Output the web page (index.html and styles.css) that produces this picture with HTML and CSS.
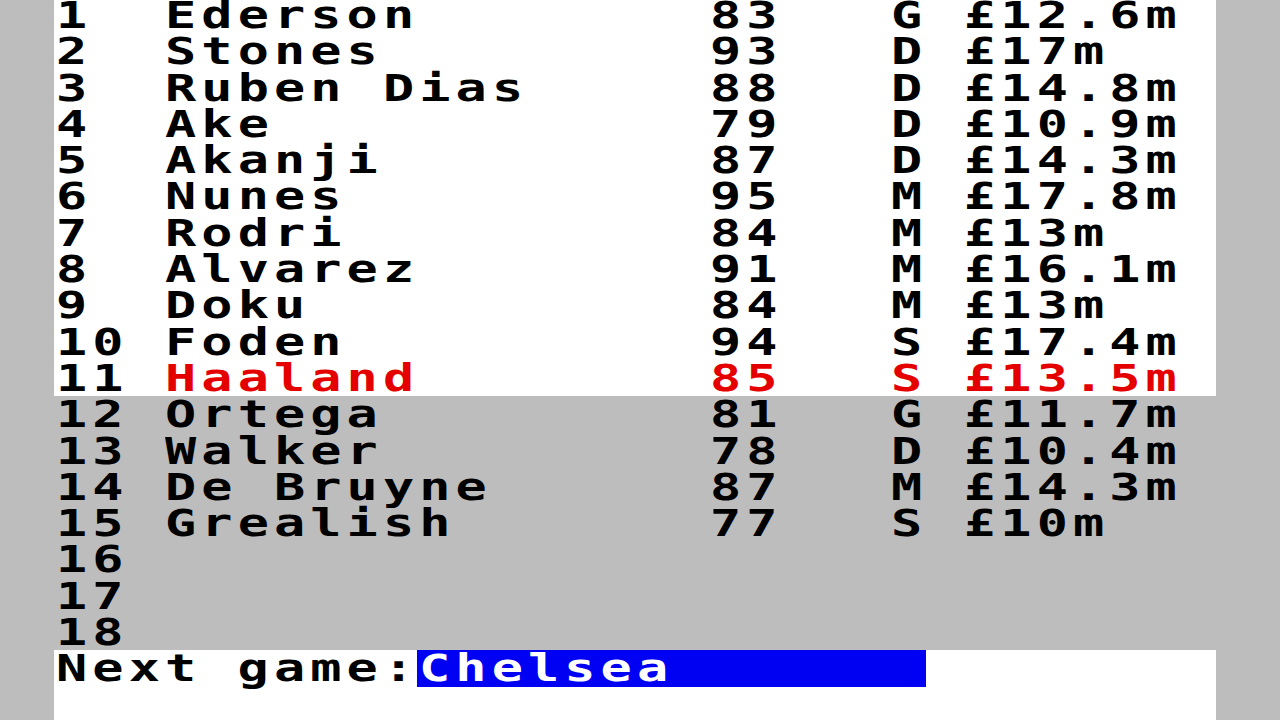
FILE: index.html
```html
<!DOCTYPE html>
<html>
<head>
<meta charset="utf-8">
<link rel="stylesheet" href="styles.css">
</head>
<body>
<div class="screen">
  <div class="row paper-white"><span class="c"><span class="t">1</span></span><span class="c"><span class="t">Ederson</span></span><span class="c"><span class="t">83</span></span><span class="c"><span class="t">G</span></span><span class="c"><span class="t">£12.6m</span></span></div>
  <div class="row paper-white"><span class="c"><span class="t">2</span></span><span class="c"><span class="t">Stones</span></span><span class="c"><span class="t">93</span></span><span class="c"><span class="t">D</span></span><span class="c"><span class="t">£17m</span></span></div>
  <div class="row paper-white"><span class="c"><span class="t">3</span></span><span class="c"><span class="t">Ruben Dias</span></span><span class="c"><span class="t">88</span></span><span class="c"><span class="t">D</span></span><span class="c"><span class="t">£14.8m</span></span></div>
  <div class="row paper-white"><span class="c"><span class="t">4</span></span><span class="c"><span class="t">Ake</span></span><span class="c"><span class="t">79</span></span><span class="c"><span class="t">D</span></span><span class="c"><span class="t">£10.9m</span></span></div>
  <div class="row paper-white"><span class="c"><span class="t">5</span></span><span class="c"><span class="t">Akanji</span></span><span class="c"><span class="t">87</span></span><span class="c"><span class="t">D</span></span><span class="c"><span class="t">£14.3m</span></span></div>
  <div class="row paper-white"><span class="c"><span class="t">6</span></span><span class="c"><span class="t">Nunes</span></span><span class="c"><span class="t">95</span></span><span class="c"><span class="t">M</span></span><span class="c"><span class="t">£17.8m</span></span></div>
  <div class="row paper-white"><span class="c"><span class="t">7</span></span><span class="c"><span class="t">Rodri</span></span><span class="c"><span class="t">84</span></span><span class="c"><span class="t">M</span></span><span class="c"><span class="t">£13m</span></span></div>
  <div class="row paper-white"><span class="c"><span class="t">8</span></span><span class="c"><span class="t">Alvarez</span></span><span class="c"><span class="t">91</span></span><span class="c"><span class="t">M</span></span><span class="c"><span class="t">£16.1m</span></span></div>
  <div class="row paper-white"><span class="c"><span class="t">9</span></span><span class="c"><span class="t">Doku</span></span><span class="c"><span class="t">84</span></span><span class="c"><span class="t">M</span></span><span class="c"><span class="t">£13m</span></span></div>
  <div class="row paper-white"><span class="c"><span class="t">10</span></span><span class="c"><span class="t">Foden</span></span><span class="c"><span class="t">94</span></span><span class="c"><span class="t">S</span></span><span class="c"><span class="t">£17.4m</span></span></div>
  <div class="row paper-white"><span class="c"><span class="t">11</span></span><span class="c ink-red"><span class="t">Haaland</span></span><span class="c ink-red"><span class="t">85</span></span><span class="c ink-red"><span class="t">S</span></span><span class="c ink-red"><span class="t">£13.5m</span></span></div>
  <div class="row"><span class="c"><span class="t">12</span></span><span class="c"><span class="t">Ortega</span></span><span class="c"><span class="t">81</span></span><span class="c"><span class="t">G</span></span><span class="c"><span class="t">£11.7m</span></span></div>
  <div class="row"><span class="c"><span class="t">13</span></span><span class="c"><span class="t">Walker</span></span><span class="c"><span class="t">78</span></span><span class="c"><span class="t">D</span></span><span class="c"><span class="t">£10.4m</span></span></div>
  <div class="row"><span class="c"><span class="t">14</span></span><span class="c"><span class="t">De Bruyne</span></span><span class="c"><span class="t">87</span></span><span class="c"><span class="t">M</span></span><span class="c"><span class="t">£14.3m</span></span></div>
  <div class="row"><span class="c"><span class="t">15</span></span><span class="c"><span class="t">Grealish</span></span><span class="c"><span class="t">77</span></span><span class="c"><span class="t">S</span></span><span class="c"><span class="t">£10m</span></span></div>
  <div class="row"><span class="c"><span class="t">16</span></span></div>
  <div class="row"><span class="c"><span class="t">17</span></span></div>
  <div class="row"><span class="c"><span class="t">18</span></span></div>
  <div class="row input-row paper-white"><span class="c"><span class="t">Next game:</span></span><span class="c field"><span class="t">Chelsea</span></span><span class="c"></span></div>
  <div class="row paper-white"></div>
</div>
</body>
</html>
```
FILE: styles.css
```css
html, body {
  margin: 0;
  padding: 0;
  background: #bdbdbd;
  overflow: hidden;
}

.screen {
  width: 1162px;
  margin: -3px 0 0 54px;
  display: flex;
  flex-direction: column;
}

.row {
  height: 36.31px;
  display: grid;
  grid-template-columns: 3fr 15fr 5fr 2fr 7fr;
  font-family: "DejaVu Sans Mono", "Liberation Mono", monospace;
  font-weight: bold;
  font-size: 37px;
  line-height: 36.31px;
  color: #000;
}

.paper-white {
  background: #fff;
}

.ink-red {
  color: #e50000;
}

.c {
  display: block;
  min-width: 0;
  white-space: pre;
}

.t {
  display: inline-block;
  white-space: pre;
  letter-spacing: 3.67px;
  transform: scaleX(1.4);
  transform-origin: 0 0;
  position: relative;
  top: 1px;
  left: 2px;
}

.input-row {
  grid-template-columns: 10fr 14fr 8fr;
}

.field {
  background: #0000f2;
  color: #fff;
}
```
